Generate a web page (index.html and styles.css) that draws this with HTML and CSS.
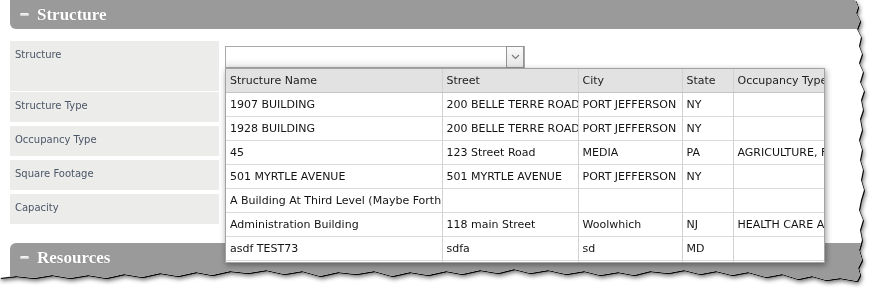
FILE: index.html
```html
<!DOCTYPE html>
<html lang="en">
    <head>
        <meta charset="UTF-8" />
        <title>Structure</title>
        <link rel="stylesheet" href="styles.css">
    </head>
    <body>
        <div class="sheet-wrap">
            <div class="sheet">
                <!-- Structure panel -->
                <div class="panel-bar top">
                    <span class="collapse"></span>
                    <span class="panel-title">Structure</span>
                </div>

                <div class="form">
                    <div class="form-row tall">
                        <div class="label">Structure</div>
                        <div class="field">
                            <div class="combo">
                                <span class="combo-btn">
                                    <svg width="9" height="6" viewBox="0 0 9 6">
                                        <path d="M1 1 L4.5 4.5 L8 1" fill="none" stroke="#7a7a7a" stroke-width="1.2" />
                                    </svg>
                                </span>
                            </div>

                            <!-- dropdown list -->
                            <div class="dropdown">
                                <table>
                                    <colgroup>
                                        <col style="width: 216px" />
                                        <col style="width: 136px" />
                                        <col style="width: 104px" />
                                        <col style="width: 51px" />
                                        <col style="width: 160px" />
                                    </colgroup>
                                    <thead>
                                        <tr>
                                            <th>Structure Name</th>
                                            <th>Street</th>
                                            <th>City</th>
                                            <th>State</th>
                                            <th>Occupancy Type</th>
                                        </tr>
                                    </thead>
                                    <tbody>
                                        <tr>
                                            <td>1907 BUILDING</td>
                                            <td>200 BELLE TERRE ROAD</td>
                                            <td>PORT JEFFERSON</td>
                                            <td>NY</td>
                                            <td></td>
                                        </tr>
                                        <tr>
                                            <td>1928 BUILDING</td>
                                            <td>200 BELLE TERRE ROAD</td>
                                            <td>PORT JEFFERSON</td>
                                            <td>NY</td>
                                            <td></td>
                                        </tr>
                                        <tr>
                                            <td>45</td>
                                            <td>123 Street Road</td>
                                            <td>MEDIA</td>
                                            <td>PA</td>
                                            <td>AGRICULTURE, FORESTRY</td>
                                        </tr>
                                        <tr>
                                            <td>501 MYRTLE AVENUE</td>
                                            <td>501 MYRTLE AVENUE</td>
                                            <td>PORT JEFFERSON</td>
                                            <td>NY</td>
                                            <td></td>
                                        </tr>
                                        <tr>
                                            <td>A Building At Third Level (Maybe Forth Level)</td>
                                            <td></td>
                                            <td></td>
                                            <td></td>
                                            <td></td>
                                        </tr>
                                        <tr>
                                            <td>Administration Building</td>
                                            <td>118 main Street</td>
                                            <td>Woolwhich</td>
                                            <td>NJ</td>
                                            <td>HEALTH CARE AND SOCIAL</td>
                                        </tr>
                                        <tr>
                                            <td>asdf TEST73</td>
                                            <td>sdfa</td>
                                            <td>sd</td>
                                            <td>MD</td>
                                            <td></td>
                                        </tr>
                                        <tr>
                                            <td></td>
                                            <td></td>
                                            <td></td>
                                            <td></td>
                                            <td></td>
                                        </tr>
                                    </tbody>
                                </table>
                            </div>
                        </div>
                    </div>
                    <div class="form-row">
                        <div class="label">Structure Type</div>
                        <div class="field"></div>
                    </div>
                    <div class="form-row">
                        <div class="label">Occupancy Type</div>
                        <div class="field"></div>
                    </div>
                    <div class="form-row">
                        <div class="label">Square Footage</div>
                        <div class="field"></div>
                    </div>
                    <div class="form-row">
                        <div class="label">Capacity</div>
                        <div class="field"></div>
                    </div>
                </div>

                <!-- Resources panel -->
                <div class="panel-bar bottom">
                    <span class="collapse"></span>
                    <span class="panel-title">Resources</span>
                </div>
            </div>
        </div>
    </body>
</html>
```

FILE: styles.css
```css
body {
    margin: 0;
    background: #fff;
    width: 871px;
    height: 293px;
    overflow: hidden;
    font-family: "DejaVu Sans", Verdana, sans-serif;
}

/* torn paper edge */
.sheet-wrap {
    filter: drop-shadow(1px 1px 0.6px rgba(0, 0, 0, 0.95)) drop-shadow(1px 2px 2px rgba(0, 0, 0, 0.55));
}
.sheet {
    position: relative;
    width: 871px;
    height: 293px;
    box-sizing: border-box;
    padding-left: 10px;
    background: #fff;
    overflow: hidden;
    clip-path: polygon(
        0 0, 855px 0, 858px 7px, 856px 13px, 860px 21px, 857px 29px, 861px 37px,
        859px 46px, 862px 54px, 859px 63px, 863px 72px, 860px 82px, 864px 91px,
        861px 100px, 863px 110px, 860px 119px, 862px 130px, 859px 140px,
        862px 150px, 860px 160px, 863px 170px, 861px 180px, 864px 190px,
        861px 200px, 859px 210px, 863px 220px, 860px 230px, 862px 240px,
        859px 250px, 862px 260px, 858px 268px, 860px 275px, 857px 281px,
        840px 278px, 826px 280px, 812px 276px, 798px 279px, 782px 274px,
        766px 277px, 748px 272px, 732px 275px, 716px 271px, 700px 274px,
        684px 270px, 668px 273px, 650px 271px, 634px 275px, 618px 272px,
        600px 275px, 584px 271px, 566px 274px, 548px 270px, 530px 273px,
        514px 269px, 498px 273px, 480px 270px, 462px 274px, 446px 271px,
        428px 275px, 410px 272px, 392px 276px, 374px 271px, 356px 274px,
        338px 272px, 320px 276px, 302px 271px, 284px 274px, 266px 270px,
        248px 273px, 230px 271px, 212px 275px, 196px 272px, 178px 276px,
        160px 273px, 142px 277px, 124px 274px, 106px 278px, 88px 275px,
        70px 278px, 52px 275px, 34px 278px, 16px 276px, 0 278px
    );
}

/* panel headers */
.panel-bar {
    display: flex;
    align-items: center;
    gap: 8px;
    height: 29px;
    padding-left: 10px;
    background: #9a9a9a;
    border-radius: 6px;
}
.panel-bar.top {
    border-radius: 0 0 6px 6px;
}
.panel-bar.bottom {
    margin-top: 19px;
    height: 41px;
    box-sizing: border-box;
    padding-bottom: 12px;
}
.collapse {
    width: 9px;
    height: 3px;
    border-radius: 2px;
    background: linear-gradient(#ffffff, #c9ccd0);
}
.panel-title {
    color: #fff;
    font-family: "Liberation Serif", "Times New Roman", serif;
    font-weight: bold;
    font-size: 17px;
    text-shadow: 0 0 1px rgba(0, 0, 0, 0.25);
}

/* form rows */
.form {
    margin-top: 12px;
    display: flex;
    flex-direction: column;
    gap: 4px;
}
.form-row {
    display: grid;
    grid-template-columns: 209px 1fr;
    height: 30px;
}
.form-row.tall {
    height: 50px;
    margin-bottom: -3px;
}
.label {
    background: #ececeb;
    padding: 7px 5px 0;
    font-size: 10px;
    line-height: 13px;
    color: #4b5666;
}
.field {
    position: relative;
    padding: 5px 0 0 6px;
}
.combo {
    position: relative;
    width: 300px;
    height: 22px;
    box-sizing: border-box;
    border: 1px solid #a9a9a9;
    background: linear-gradient(#fff 55%, #eeeeee);
}
.combo-btn {
    position: absolute;
    right: 0;
    top: -1px;
    width: 18px;
    height: 22px;
    box-sizing: border-box;
    border: 1px solid #949494;
    background: linear-gradient(#fafafa, #e6e6e6);
    display: flex;
    align-items: center;
    justify-content: center;
}

/* dropdown grid */
.dropdown {
    position: absolute;
    z-index: 2;
    top: 27px;
    left: 6px;
    width: 600px;
    height: 195px;
    box-sizing: border-box;
    border: 1px solid #a3a3a3;
    background: #fff;
    overflow: hidden;
    box-shadow: 1px 2px 6px rgba(0, 0, 0, 0.4);
}
.dropdown table {
    border-collapse: collapse;
    table-layout: fixed;
    width: 667px;
}
.dropdown th,
.dropdown td {
    height: 23px;
    padding: 0 4px;
    border-right: 1px solid #d2d2d2;
    border-bottom: 1px solid #d9d9d9;
    white-space: nowrap;
    overflow: hidden;
    font-size: 11px;
    font-weight: normal;
    text-align: left;
    color: #141414;
}
.dropdown th {
    background: #e2e2e2;
    border-bottom-color: #c4c4c4;
    color: #222;
}
```
